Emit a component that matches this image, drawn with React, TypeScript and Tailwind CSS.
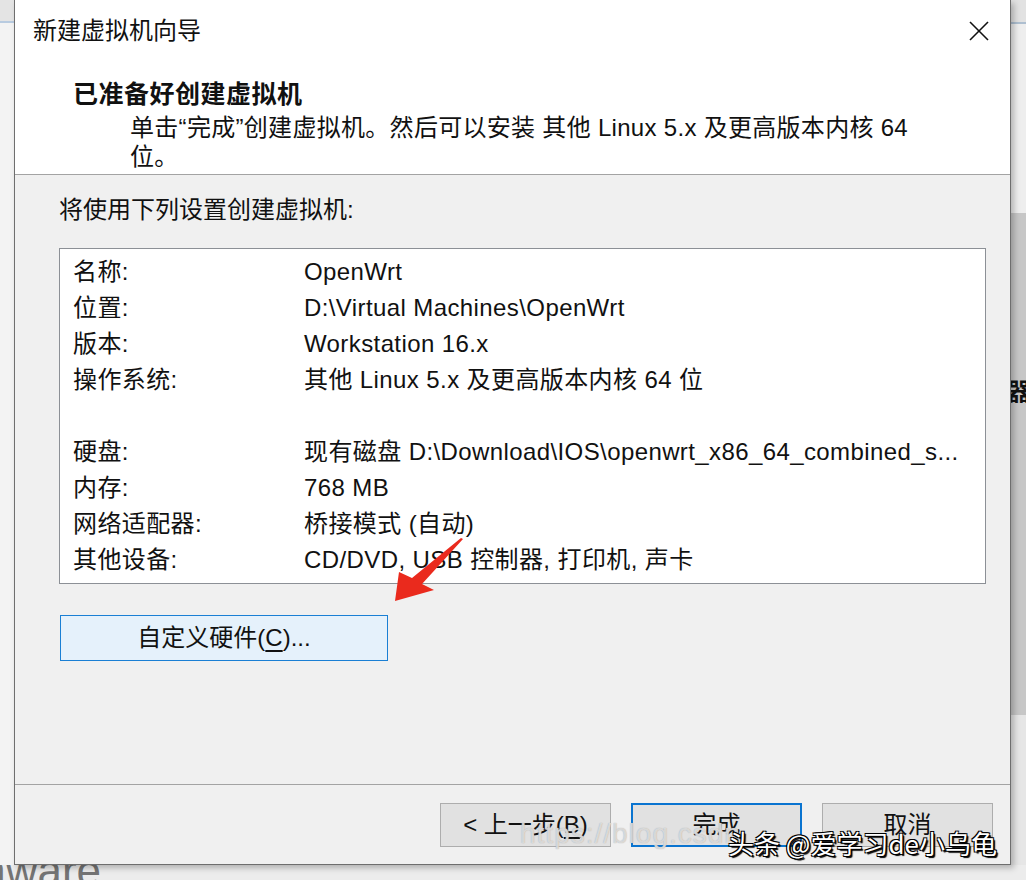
import React from 'react';

const rows: [string, string][] = [
  ['名称:', 'OpenWrt'],
  ['位置:', 'D:\\Virtual Machines\\OpenWrt'],
  ['版本:', 'Workstation 16.x'],
  ['操作系统:', '其他 Linux 5.x 及更高版本内核 64 位'],
  ['', ''],
  ['硬盘:', '现有磁盘 D:\\Download\\IOS\\openwrt_x86_64_combined_s...'],
  ['内存:', '768 MB'],
  ['网络适配器:', '桥接模式 (自动)'],
  ['其他设备:', 'CD/DVD, USB 控制器, 打印机, 声卡'],
];

function CloseIcon() {
  return (
    <svg width="20" height="20" viewBox="0 0 20 20" className="text-[#111]">
      <line x1="1" y1="1" x2="19" y2="19" stroke="currentColor" strokeWidth="1.6" />
      <line x1="19" y1="1" x2="1" y2="19" stroke="currentColor" strokeWidth="1.6" />
    </svg>
  );
}

function WizardButton({ children, primary }: { children: React.ReactNode; primary?: boolean }) {
  return (
    <button
      className={
        primary
          ? 'w-[171px] h-[44px] bg-[#e1e1e1] border-2 border-[#0a74d0] text-[24px] text-[#111] flex items-center justify-center'
          : 'w-[171px] h-[44px] bg-[#e1e1e1] border border-[#adadad] text-[24px] text-[#111] flex items-center justify-center'
      }
    >
      {children}
    </button>
  );
}

export default function App() {
  return (
    <div className="relative w-[1026px] h-[880px] overflow-hidden bg-[#ececec] flex flex-col font-[Liberation_Sans,Noto_Sans_CJK_SC,sans-serif] text-[#111]">
      <div className="flex h-[865px]">
        {/* left background strip */}
        <div className="w-[14px] shrink-0 flex flex-col">
          <div className="h-[23px] bg-[#e4e4e4] border-b-2 border-[#b8cbe0]" />
          <div className="flex-1 bg-[#f3f3f3]" />
        </div>

        {/* dialog */}
        <div className="w-[997px] shrink-0 flex flex-col border border-t-0 border-[#6e6e6e] shadow-[3px_3px_6px_rgba(0,0,0,0.25)] z-10">
          {/* header */}
          <div className="h-[175px] bg-white border-b border-[#a3a3a3] flex flex-col">
            <div className="h-[62px] flex items-center justify-between pl-[18px] pr-[21px]">
              <span className="text-[24px] leading-none">新建虚拟机向导</span>
              <CloseIcon />
            </div>
            <div className="mt-[17px] pl-[58px] text-[25px] tracking-[0.5px] font-bold leading-[30px]">已准备好创建虚拟机</div>
            <div className="mt-[4px] pl-[115px] text-[24px] leading-[29px] tracking-[0.3px]">
              <div>单击“完成”创建虚拟机。然后可以安装 其他 Linux 5.x 及更高版本内核 64</div>
              <div>位。</div>
            </div>
          </div>

          {/* body */}
          <div className="flex-1 bg-[#f0f0f0] flex flex-col pl-[44px] pt-[20px]">
            <div className="text-[24px] leading-[30px]">将使用下列设置创建虚拟机:</div>
            <div className="mt-[23px] w-[927px] h-[336px] bg-white border border-[#8c9096] pl-[13px] pt-[5px]">
              {rows.map(([label, value], i) => (
                <div key={i} className="h-[36px] flex items-center text-[24px] whitespace-nowrap tracking-[0.4px]">
                  <span className="w-[231px]">{label}</span>
                  <span>{value}</span>
                </div>
              ))}
            </div>
            <button className="mt-[31px] ml-px w-[328px] h-[46px] bg-[#e5f1fb] border border-[#1a7fd4] text-[24px] text-[#111] flex items-center justify-center">
              自定义硬件(<span className="underline underline-offset-4">C</span>)...
            </button>
          </div>

          {/* footer */}
          <div className="h-[80px] bg-[#f0f0f0] border-t border-[#a3a3a3] flex justify-end items-start gap-[20px] pt-[18px] pr-[17px]">
            <WizardButton>
              &lt; 上一步(<span className="underline underline-offset-4">B</span>)
            </WizardButton>
            <WizardButton primary>完成</WizardButton>
            <WizardButton>取消</WizardButton>
          </div>
        </div>

        {/* right background strip */}
        <div className="flex-1 min-w-0 flex flex-col overflow-hidden">
          <div className="h-[24px] bg-[#e2e2e2] border-b-2 border-[#aebfd0]" />
          <div className="h-[189px] bg-[#eeeeee]" />
          <div className="h-[502px] bg-[#c7c7c7] pt-[167px] overflow-hidden">
            <div className="text-[24px] leading-none font-bold text-[#111] -ml-[4px] whitespace-nowrap">器</div>
          </div>
          <div className="flex-1 bg-[#e6e6e6]" />
        </div>
      </div>

      {/* bottom background strip */}
      <div className="flex-1 bg-[#ececec] overflow-hidden">
        <div className="-mt-[16px] -ml-[31px] text-[44px] leading-none text-[#747474] whitespace-nowrap">mware</div>
      </div>

      {/* red arrow annotation */}
      <svg className="absolute left-[390px] top-[535px] z-20" width="80" height="70" viewBox="0 0 80 70">
        <polygon points="73,4 32,49 44,55 5,66 9,37 22,43 71,3" fill="#ea2a1d" />
      </svg>

      {/* watermarks */}
      <div className="absolute left-[520px] top-[813px] z-20 text-[28px] text-white/60 [text-shadow:0_0_1px_#999] tracking-[1px]">
        https://blog.csdn
      </div>
      <div className="absolute left-[728px] top-[830px] z-30 text-[26px] leading-none text-white font-[Noto_Sans_CJK_SC,sans-serif] [text-shadow:1px_1px_0_#000,-1px_-1px_0_#000,1px_-1px_0_#000,-1px_1px_0_#000,2px_2px_1px_#000]">
        头条 @爱学习de小乌龟
      </div>
    </div>
  );
}
